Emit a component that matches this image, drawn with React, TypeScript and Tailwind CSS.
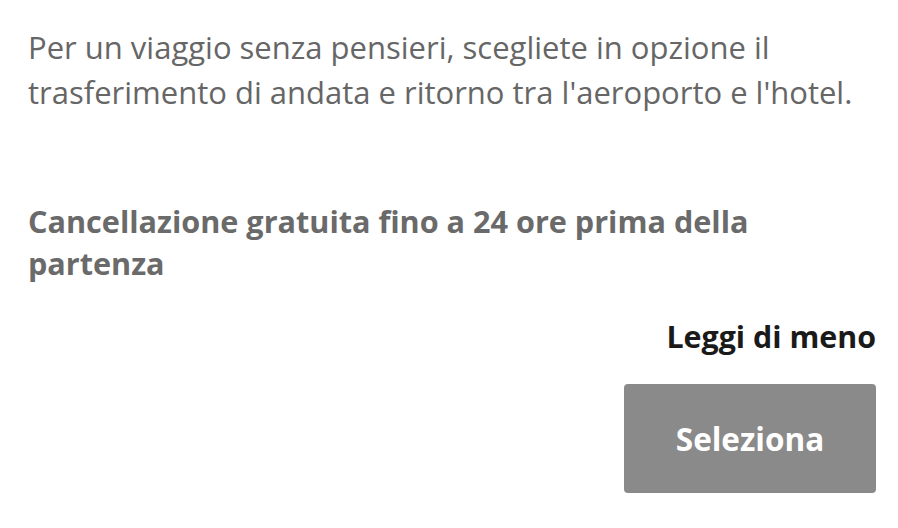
export default function App() {
  return (
    <div className="w-[898px] h-[528px] overflow-hidden bg-white pl-[28px] pr-[22px] pt-[25px] font-['Open_Sans','Noto_Sans',sans-serif]">
      <p className="text-[31px] leading-[45px] text-[#666666]">
        Per un viaggio senza pensieri, scegliete in opzione il trasferimento di andata e ritorno tra l'aeroporto e l'hotel.
      </p>
      <p className="mt-[85px] w-[780px] text-[30.6px] leading-[42px] font-bold text-[#6a6a6a]">
        Cancellazione gratuita fino a 24 ore prima della partenza
      </p>
      <div className="mt-[32px] flex flex-col items-end">
        <button className="text-[30.4px] leading-[42px] font-bold text-[#1a1a1a]">Leggi di meno</button>
        <button className="mt-[26px] w-[252px] h-[109px] rounded-[4px] bg-[#8a8a8a] text-white text-[31.5px] font-bold flex items-center justify-center">
          Seleziona
        </button>
      </div>
    </div>
  );
}
